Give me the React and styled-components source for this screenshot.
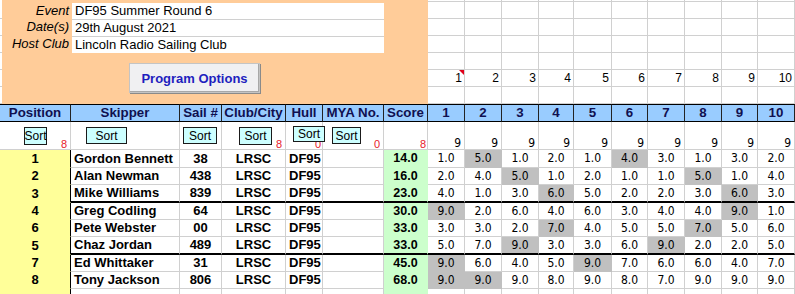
import React from "react";
import styled, { createGlobalStyle, css } from "styled-components";

const GRID = "#d0d0d0";
const ORANGE = "#ffcc99";
const BLUE = "#99ccff";
const YELLOW = "#ffff99";
const GREEN = "#ccffcc";
const DROP = "#c0c0c0";

const MAIN_COLS = [71, 109, 42, 64, 37, 61, 44];
const RACE_COLS = [37, 37, 37, 35, 38, 36, 37, 37, 36, 37];
const px = (list) => list.map((w) => w + "px").join(" ");

const SANS = `"Liberation Sans", Arial, sans-serif`;
const NARROW = `"Liberation Sans Narrow", "Arial Narrow", "DejaVu Sans Condensed", sans-serif`;

const GlobalStyle = createGlobalStyle`
	body {
		margin: 0;
		background: #fff;
		font-family: ${SANS};
		color: #000;
	}
`;

const Sheet = styled.div`
	width: 795px;
	height: 294px;
	overflow: hidden;
`;

// top block: event details + empty race grid
const Top = styled.div`
	display: flex;
	height: 104px;
`;

const Edge = styled.div`
	width: 2px;
	background: repeating-linear-gradient(to bottom, transparent 0 16px, ${GRID} 16px 17px);
	background-position: 0 2px;
`;

const Panel = styled.div`
	width: 426px;
	box-sizing: border-box;
	padding-top: 3px;
	background: ${ORANGE};
`;

const InfoGrid = styled.div`
	display: grid;
	grid-template-columns: 70px 312px;
	grid-template-rows: 16px 17px 17px;
`;

const InfoLabel = styled.div`
	font-size: 13px;
	font-style: italic;
	text-align: right;
	padding-right: 3px;
	line-height: 16px;
`;

const InfoValue = styled.div`
	box-sizing: border-box;
	background: #fff;
	font-size: 13px;
	line-height: 16px;
	padding-left: 3px;
	border-top: ${(p) => (p.$first ? "none" : `1px solid ${GRID}`)};
`;

const ProgramButton = styled.button`
	display: block;
	margin: 10px 0 0 127px;
	width: 131px;
	height: 30px;
	padding: 0;
	background: #f0f0f2;
	border: 1px solid #c4c4c4;
	box-shadow: inset -1px -1px 0 #a8a8a8, 1px 1px 0 #8a8a8a;
	color: #1e1ebe;
	font: bold 13px ${SANS};
`;

const RaceGrid = styled.div`
	display: grid;
	grid-template-columns: ${px(RACE_COLS)};
	grid-template-rows: 2px repeat(6, 17px);
`;

const GridCell = styled.div`
	position: relative;
	box-sizing: border-box;
	border-right: 1px solid ${GRID};
	border-bottom: 1px solid ${GRID};
	font-size: 12px;
	line-height: 17px;
	text-align: right;
	padding-right: 2px;
	overflow: visible;
`;

const CommentMark = styled.span`
	position: absolute;
	top: 0;
	right: 0;
	width: 0;
	height: 0;
	border-top: 5px solid #e0001a;
	border-left: 5px solid transparent;
`;

// results table
const Table = styled.div`
	display: grid;
	grid-template-columns: ${px([...MAIN_COLS, ...RACE_COLS])};
`;

const HeadCell = styled.div`
	box-sizing: border-box;
	height: 18px;
	background: ${BLUE};
	border-top: 1px solid #000;
	border-bottom: 1px solid #000;
	border-right: 1px solid #222;
	color: #101050;
	font-size: 13.3px;
	font-weight: bold;
	line-height: 16px;
	text-align: center;
	white-space: nowrap;
	overflow: hidden;
`;

const SortCell = styled.div`
	position: relative;
	box-sizing: border-box;
	height: 28px;
	display: flex;
	align-items: flex-end;
	justify-content: flex-end;
	padding: 0 ${(p) => p.$pad}px ${(p) => (p.$race ? 1 : 0)}px 0;
	border-right: 1px solid ${GRID};
	border-bottom: 1px solid ${GRID};
`;

const Tally = styled.span`
	font-size: ${(p) => (p.$red ? 11 : 12)}px;
	font-family: ${(p) => (p.$red ? SANS : NARROW)};
	line-height: 10px;
	color: ${(p) => (p.$red ? "#e8202a" : "#000")};
`;

const SortButton = styled.div`
	position: absolute;
	z-index: 2;
	left: ${(p) => p.$x}px;
	top: ${(p) => p.$y}px;
	width: ${(p) => p.$w}px;
	height: ${(p) => p.$h}px;
	box-sizing: border-box;
	display: flex;
	align-items: center;
	justify-content: center;
	background: #ccffff;
	border: 1px solid #1a1a1a;
	font-size: 12px;
	color: #000;
`;

const rowCell = css`
	box-sizing: border-box;
	height: ${(p) => p.$h}px;
	line-height: ${(p) => p.$h - (p.$thick ? 2 : 1)}px;
	white-space: nowrap;
	overflow: hidden;
	border-right: 1px solid ${GRID};
	border-bottom: ${(p) => (p.$thick ? "2px solid #000" : `1px solid ${GRID}`)};
`;

const PosCell = styled.div`
	${rowCell};
	background: ${YELLOW};
	border-right: 1px solid #000;
	border-bottom: 1px solid ${YELLOW};
	font-size: 13px;
	font-weight: bold;
	text-align: center;
`;

const TextCell = styled.div`
	${rowCell};
	font-size: 13px;
	font-weight: bold;
	text-align: ${(p) => p.$align || "center"};
	padding-left: ${(p) => (p.$align === "left" ? 3 : 0)}px;
`;

const ScoreCell = styled.div`
	${rowCell};
	background: ${GREEN};
	border-right-color: ${GREEN};
	border-bottom-color: ${(p) => (p.$thick ? "#000" : GREEN)};
	font-size: 12.5px;
	font-weight: bold;
	text-align: center;
`;

const RaceCell = styled.div`
	${rowCell};
	background: ${(p) => (p.$drop ? DROP : "#fff")};
	border-right-color: ${(p) => (p.$drop ? DROP : GRID)};
	border-bottom-color: ${(p) => (p.$thick ? "#000" : p.$drop ? DROP : GRID)};
	font-family: ${NARROW};
	font-size: 12px;
	text-align: center;
`;

const HEADERS = ["Position", "Skipper", "Sail #", "Club/City", "Hull", "MYA No.", "Score"];
const RACES = [1, 2, 3, 4, 5, 6, 7, 8, 9, 10];

const SORTS = [
	{ btn: { x: 24, y: 5, w: 23, h: 18 }, tally: "8", pad: 3 },
	{ btn: { x: 15, y: 5, w: 41, h: 17 }, pad: 3 },
	{ btn: { x: 3, y: 5, w: 34, h: 17 }, pad: 3 },
	{ btn: { x: 17, y: 5, w: 33, h: 18 }, tally: "8", pad: 3 },
	{ btn: { x: 7, y: 4, w: 32, h: 16 }, tally: "0", pad: 1 },
	{ btn: { x: 9, y: 5, w: 29, h: 17 }, tally: "0", pad: 3 },
	{ tally: "8", pad: 1 },
];

const ENTRIES = [
	{ pos: 1, name: "Gordon Bennett", sail: "38", score: "14.0", races: [1, 5, 1, 2, 1, 4, 3, 1, 3, 2], drop: [1, 5] },
	{ pos: 2, name: "Alan Newman", sail: "438", score: "16.0", races: [2, 4, 5, 1, 2, 1, 1, 5, 1, 4], drop: [2, 7] },
	{ pos: 3, name: "Mike Williams", sail: "839", score: "23.0", races: [4, 1, 3, 6, 5, 2, 2, 3, 6, 3], drop: [3, 8], thick: true },
	{ pos: 4, name: "Greg Codling", sail: "64", score: "30.0", races: [9, 2, 6, 4, 6, 3, 4, 4, 9, 1], drop: [0, 8] },
	{ pos: 6, name: "Pete Webster", sail: "00", score: "33.0", races: [3, 3, 2, 7, 4, 5, 5, 7, 5, 6], drop: [3, 7] },
	{ pos: 5, name: "Chaz Jordan", sail: "489", score: "33.0", races: [5, 7, 9, 3, 3, 6, 9, 2, 2, 5], drop: [2, 6], thick: true },
	{ pos: 7, name: "Ed Whittaker", sail: "31", score: "45.0", races: [9, 6, 4, 5, 9, 7, 6, 6, 4, 7], drop: [0, 4] },
	{ pos: 8, name: "Tony Jackson", sail: "806", score: "68.0", races: [9, 9, 9, 8, 9, 8, 7, 9, 9, 9], drop: [0, 1] },
];
const ROW_HEIGHTS = [18, 17, 18, 17, 17, 18, 17, 17];

function ResultRow({ entry, h }) {
	const t = !!entry.thick;
	return (
		<>
			<PosCell $h={h}>{entry.pos}</PosCell>
			<TextCell $h={h} $thick={t} $align="left">{entry.name}</TextCell>
			<TextCell $h={h} $thick={t}>{entry.sail}</TextCell>
			<TextCell $h={h} $thick={t}>LRSC</TextCell>
			<TextCell $h={h} $thick={t} $align="left">DF95</TextCell>
			<TextCell $h={h} $thick={t} />
			<ScoreCell $h={h} $thick={t}>{entry.score}</ScoreCell>
			{entry.races.map((r, i) => (
				<RaceCell key={i} $h={h} $thick={t} $drop={entry.drop.includes(i)}>
					{r.toFixed(1)}
				</RaceCell>
			))}
		</>
	);
}

export default function App() {
	return (
		<>
			<GlobalStyle />
			<Sheet>
				<Top>
					<Edge />
					<Panel>
						<InfoGrid>
							<InfoLabel>Event</InfoLabel>
							<InfoValue $first>DF95 Summer Round 6</InfoValue>
							<InfoLabel>Date(s)</InfoLabel>
							<InfoValue>29th August 2021</InfoValue>
							<InfoLabel>Host Club</InfoLabel>
							<InfoValue>Lincoln Radio Sailing Club</InfoValue>
						</InfoGrid>
						<ProgramButton>Program Options</ProgramButton>
					</Panel>
					<RaceGrid>
						{[0, 1, 2, 3, 4, 5, 6].map((row) =>
							RACES.map((n) => (
								<GridCell key={row + "-" + n}>
									{row === 5 && n}
									{row === 5 && n === 1 && <CommentMark />}
								</GridCell>
							))
						)}
					</RaceGrid>
				</Top>

				<Table>
					{HEADERS.map((h) => (
						<HeadCell key={h}>{h}</HeadCell>
					))}
					{RACES.map((n) => (
						<HeadCell key={"r" + n}>{n}</HeadCell>
					))}

					{SORTS.map((s, i) => (
						<SortCell key={"s" + i} $pad={s.pad}>
							{s.btn && (
								<SortButton $x={s.btn.x} $y={s.btn.y} $w={s.btn.w} $h={s.btn.h}>
									Sort
								</SortButton>
							)}
							{s.tally && <Tally $red>{s.tally}</Tally>}
						</SortCell>
					))}
					{RACES.map((n) => (
						<SortCell key={"sr" + n} $pad={3} $race>
							<Tally>9</Tally>
						</SortCell>
					))}

					{ENTRIES.map((e, i) => (
						<ResultRow key={e.name} entry={e} h={ROW_HEIGHTS[i]} />
					))}

					<PosCell $h={17} />
					{[0, 1, 2, 3, 4].map((i) => (
						<TextCell key={"e" + i} $h={17} />
					))}
					<ScoreCell $h={17} />
					{RACES.map((n) => (
						<RaceCell key={"er" + n} $h={17} />
					))}
				</Table>
			</Sheet>
		</>
	);
}
